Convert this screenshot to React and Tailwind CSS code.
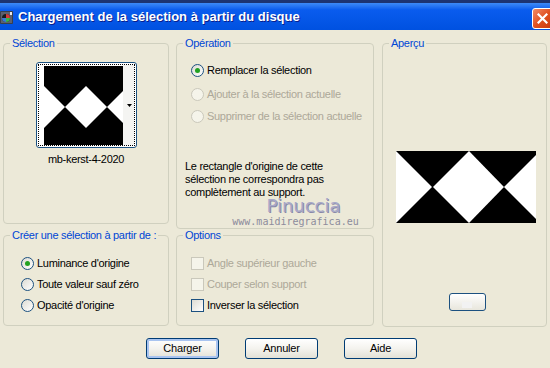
import React from "react";

const font = { fontFamily: '"Liberation Sans", Arial, sans-serif' };

const Radio = ({ checked, disabled, label }) => (
  <div className="flex items-center h-[13px]">
    <span
      className={
        "w-[13px] h-[13px] rounded-full border flex items-center justify-center shrink-0 " +
        (disabled
          ? "border-[#CAC8BB] bg-[#F5F4EA]"
          : "border-[#1C5180] bg-linear-to-br from-[#DCDBD3] to-white")
      }
    >
      {checked && <span className="w-[5px] h-[5px] rounded-full bg-[#21A121]" />}
    </span>
    <span className={"ml-[3px] text-[11px] leading-[13px] tracking-[-0.3px] whitespace-nowrap " + (disabled ? "text-[#ACA899]" : "text-black")}>
      {label}
    </span>
  </div>
);

const Check = ({ disabled, label }) => (
  <div className="flex items-center h-[13px]">
    <span
      className={
        "w-[13px] h-[13px] border shrink-0 " +
        (disabled ? "border-[#CAC8BB] bg-[#F5F4EA]" : "border-[#1C5180] bg-linear-to-br from-[#DCDBD3] to-white")
      }
    />
    <span className={"ml-[3px] text-[11px] leading-[13px] tracking-[-0.3px] whitespace-nowrap " + (disabled ? "text-[#ACA899]" : "text-black")}>
      {label}
    </span>
  </div>
);

const Group = ({ title, className, children }) => (
  <fieldset className={"border border-[#D0D0BF] rounded-[4px] min-w-0 " + className}>
    <legend className="ml-[6px] px-[2px] text-[11px] leading-[13px] tracking-[-0.3px] whitespace-nowrap text-[#0046D5]">{title}</legend>
    {children}
  </fieldset>
);

const Pattern = ({ className }) => (
  <svg viewBox="0 0 140 72" preserveAspectRatio="none" className={className}>
    <rect width="140" height="72" fill="#000" />
    <polygon points="0,0 36,36 0,72" fill="#fff" />
    <polygon points="73,0 108,36 73,72 37,36" fill="#fff" />
    <polygon points="144,0 108,36 144,72" fill="#fff" />
  </svg>
);

const Btn = ({ label, def }) => (
  <button
    className={
      "w-[73px] h-[21px] border border-[#003C74] rounded-[3px] bg-linear-to-b from-white via-[#F4F3EE] to-[#E3E1D6] text-[11px] tracking-[-0.2px] text-black " +
      (def ? "shadow-[inset_0_0_0_2px_#A9C4F0]" : "")
    }
  >
    {label}
  </button>
);

export default function App() {
  return (
    <div className="relative w-[550px] h-[368px] overflow-hidden bg-[#ECE9D8]" style={font}>
      {/* title bar */}
      <div className="h-[3px] bg-[#1d3472]" />
      <div className="h-[27px] flex items-center bg-linear-to-b from-[#3D8AF7] via-[#0A5CEE] via-25% to-[#0051E0]">
        <svg width="13" height="13" viewBox="0 0 13 13" className="ml-0 mt-[1px]">
          <rect x="0" y="0" width="13" height="13" rx="1" fill="#3a3f4a" />
          <rect x="1" y="1" width="11" height="11" fill="#5b6170" />
          <circle cx="6" cy="7" r="4" fill="#1b1b1b" />
          <path d="M6 3 A4 4 0 0 1 10 7 L6 7Z" fill="#d43a3a" />
          <path d="M6 7 L10 7 A4 4 0 0 1 6 11Z" fill="#38b24a" />
          <path d="M6 7 L6 11 A4 4 0 0 1 2 7Z" fill="#3a7ad4" />
          <rect x="10" y="1" width="2" height="3" fill="#e8e8e8" />
        </svg>
        <span className="ml-[5px] text-white font-bold text-[13px] leading-none [text-shadow:1px_1px_0_#0A1E8C]">
          Chargement de la sélection à partir du disque
        </span>
        <div className="ml-auto -mr-[3px] mt-[4px] w-[21px] h-[21px] rounded-[3px] border border-white bg-linear-to-br from-[#F08A64] via-[#E0501F] to-[#C8380E] flex items-center justify-center">
          <svg width="11" height="11" viewBox="0 0 11 11">
            <path d="M1.5 1.5 L9.5 9.5 M9.5 1.5 L1.5 9.5" stroke="#fff" strokeWidth="2.2" strokeLinecap="square" />
          </svg>
        </div>
      </div>

      {/* body */}
      <div className="flex pt-[7px] pl-[3px]">
        {/* left column */}
        <div className="w-[166px] flex flex-col">
          <Group title="Sélection" className="h-[187px]">
            <div className="flex flex-col items-center">
              <div className="mt-[12px] w-[101px] h-[86px] border border-[#1C5180] rounded-[3px] bg-white p-[1px]">
                <div className="w-full h-full border border-dotted border-black flex">
                  <div className="ml-[5px] mt-[1px] w-[79px] h-[79px] bg-black">
                    <svg viewBox="0 0 79 79" className="w-[79px] h-[79px]">
                      <rect width="79" height="79" fill="#000" />
                      <polygon points="0,20 21,41 0,62" fill="#fff" />
                      <polygon points="42,20 63,41 42,62 21,41" fill="#fff" />
                      <polygon points="79,25 63,41 79,57" fill="#fff" />
                    </svg>
                  </div>
                  <div className="flex-1 bg-[#F4F4F2] flex items-center justify-end pr-[2px]">
                    <svg width="5" height="3" viewBox="0 0 5 3">
                      <path d="M0 0 H5 L2.5 3Z" fill="#000" />
                    </svg>
                  </div>
                </div>
              </div>
              <span className="mt-[5px] text-[11px] leading-[13px] tracking-[-0.3px] text-black">mb-kerst-4-2020</span>
            </div>
          </Group>
          <Group title="Créer une sélection à partir de :" className="mt-[5px] h-[97px]">
            <div className="pl-[17px] pt-[15px] flex flex-col gap-[8px]">
              <Radio checked label="Luminance d'origine" />
              <Radio label="Toute valeur sauf zéro" />
              <Radio label="Opacité d'origine" />
            </div>
          </Group>
        </div>

        {/* middle column */}
        <div className="ml-[7px] w-[198px] flex flex-col">
          <Group title="Opération" className="h-[192px]">
            <div className="pl-[14px] pt-[14px] flex flex-col">
              <Radio checked label="Remplacer la sélection" />
              <div className="mt-[11px]">
                <Radio disabled label="Ajouter à la sélection actuelle" />
              </div>
              <div className="mt-[9px]">
                <Radio disabled label="Supprimer de la sélection actuelle" />
              </div>
            </div>
            <p className="pl-[8px] mt-[37px] text-[11px] leading-[13px] tracking-[-0.3px] text-black">
              Le rectangle d'origine de cette
              <br />
              sélection ne correspondra pas
              <br />
              complètement au support.
            </p>
          </Group>
          <Group title="Options" className="h-[97px]">
            <div className="pl-[14px] pt-[15px] flex flex-col gap-[8px]">
              <Check disabled label="Angle supérieur gauche" />
              <Check disabled label="Couper selon support" />
              <Check label="Inverser la sélection" />
            </div>
          </Group>
        </div>

        {/* right column */}
        <div className="ml-[8px] w-[165px]">
          <Group title="Aperçu" className="h-[290px]">
            <div className="flex flex-col items-center">
              <Pattern className="mt-[101px] ml-[3px] w-[140px] h-[72px]" />
              <div className="mt-[70px] ml-[5px] w-[37px] h-[18px] border border-[#1C5180] rounded-[3px] bg-linear-to-b from-white to-[#E8E6DC] flex items-end justify-center pb-[2px]">
                <span className="w-[10px] h-[6px] bg-[#F2F2F2]" />
              </div>
            </div>
          </Group>
        </div>
      </div>

      {/* buttons */}
      <div className="mt-[11px] pl-[146px] flex gap-[26px]">
        <Btn label="Charger" def />
        <Btn label="Annuler" />
        <Btn label="Aide" />
      </div>

      {/* watermark */}
      <div className="absolute left-[235px] top-[197px] w-[121px] flex flex-col items-center pointer-events-none">
        <span className="ml-[16px] text-[18px] leading-[17px] text-[#A8A8C8] [text-shadow:1px_1px_0_#8888a8]" style={{ fontFamily: '"DejaVu Sans", sans-serif' }}>
          Pinuccia
        </span>
        <span className="mt-[2px] text-[10px] leading-[11px] text-[#8C8C9C]" style={{ fontFamily: '"DejaVu Sans Mono", monospace' }}>
          www.maidiregrafica.eu
        </span>
      </div>
    </div>
  );
}
